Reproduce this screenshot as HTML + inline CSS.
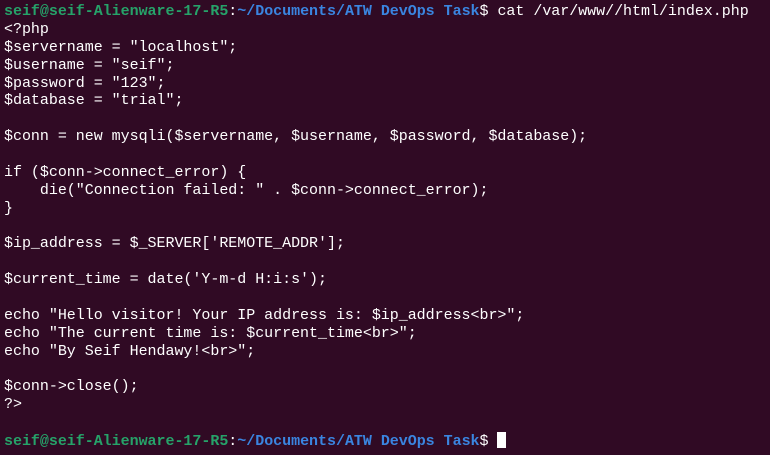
<!DOCTYPE html>
<html><head><style>
html,body{margin:0;padding:0;background:#300a24;width:770px;height:455px;overflow:hidden}
pre{margin:0;padding:3px 0 0 4px;font-family:"Liberation Mono","DejaVu Sans Mono",monospace;font-size:15px;line-height:17.875px;color:#ffffff;letter-spacing:-0.03px}
.g{color:#26a269;font-weight:bold}.b{color:#3a85e0;font-weight:bold}
.c{display:inline-block;width:9px;height:16px;background:#fff;vertical-align:-3px}
</style></head><body><pre><span class="g">seif@seif-Alienware-17-R5</span>:<span class="b">~/Documents/ATW DevOps Task</span>$ cat /var/www//html/index.php
&lt;?php
$servername = "localhost";
$username = "seif";
$password = "123";
$database = "trial";

$conn = new mysqli($servername, $username, $password, $database);

if ($conn-&gt;connect_error) {
    die("Connection failed: " . $conn-&gt;connect_error);
}

$ip_address = $_SERVER['REMOTE_ADDR'];

$current_time = date('Y-m-d H:i:s');

echo "Hello visitor! Your IP address is: $ip_address&lt;br&gt;";
echo "The current time is: $current_time&lt;br&gt;";
echo "By Seif Hendawy!&lt;br&gt;";

$conn-&gt;close();
?&gt;

<span class="g">seif@seif-Alienware-17-R5</span>:<span class="b">~/Documents/ATW DevOps Task</span>$ <span class="c"></span></pre></body></html>
